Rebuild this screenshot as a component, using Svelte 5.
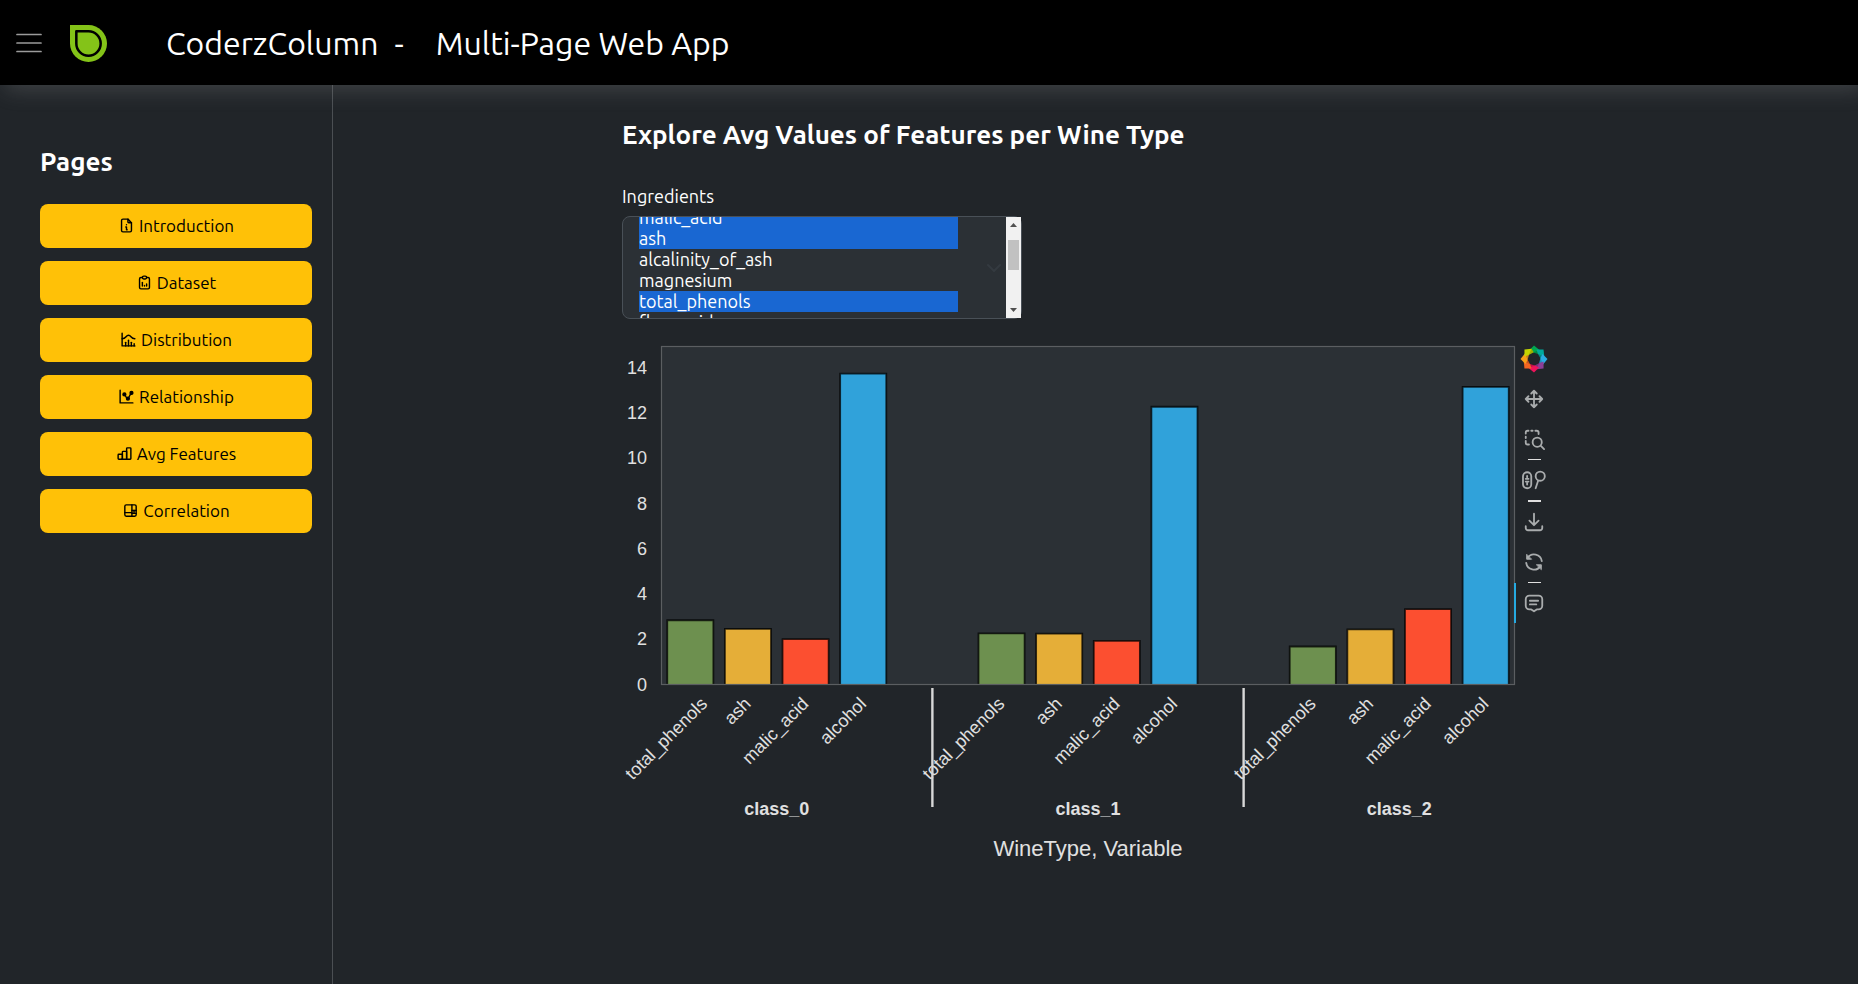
<script>
  import { onMount } from 'svelte';

  const pages = [
    { name: 'Introduction', icon: 'file' },
    { name: 'Dataset', icon: 'clipboard' },
    { name: 'Distribution', icon: 'histogram' },
    { name: 'Relationship', icon: 'dots' },
    { name: 'Avg Features', icon: 'bars' },
    { name: 'Correlation', icon: 'board' }
  ];

  const icons = {
    file: ['M14 3v4a1 1 0 0 0 1 1h4', 'M17 21H7a2 2 0 0 1-2-2V5a2 2 0 0 1 2-2h7l5 5v11a2 2 0 0 1-2 2z', 'M11 14h1v4h1', 'M12 11h.01'],
    clipboard: ['M9 5H7a2 2 0 0 0-2 2v12a2 2 0 0 0 2 2h10a2 2 0 0 0 2-2V7a2 2 0 0 0-2-2h-2', 'M9 5a2 2 0 0 1 2-2h2a2 2 0 0 1 0 4h-2a2 2 0 0 1-2-2z', 'M9 17v-5', 'M12 17v-1', 'M15 17v-3'],
    histogram: ['M3 3v18h18', 'M20 18v3', 'M16 16v5', 'M12 13v8', 'M8 16v5', 'M3 11c6 0 5-5 9-5s3 5 9 5'],
    dots: ['M3 3v18h18', 'M10.2 10.6l2.6 4.6', 'M15.1 13.4l3-5.4'],
    bars: ['M4 13h5v7H4a1 1 0 0 1-1-1v-5a1 1 0 0 1 1-1z', 'M9 20V10a1 1 0 0 1 1-1h5v11', 'M15 20V5a1 1 0 0 1 1-1h4a1 1 0 0 1 1 1v14a1 1 0 0 1-1 1H8'],
    board: ['M4 6a2 2 0 0 1 2-2h12a2 2 0 0 1 2 2v12a2 2 0 0 1-2 2H6a2 2 0 0 1-2-2z', 'M4 15h10', 'M14 4v16', 'M14 12h6', 'M17 12v4', 'M14 16h6']
  };

  const ingredients = [
    'alcohol', 'malic_acid', 'ash', 'alcalinity_of_ash', 'magnesium', 'total_phenols', 'flavanoids',
    'nonflavanoid_phenols', 'proanthocyanins', 'color_intensity', 'hue', 'od280/od315_of_diluted_wines', 'proline'
  ];
  let selected = $state(['alcohol', 'malic_acid', 'ash', 'total_phenols']);
  let list;
  let thumb = $state(8);

  // the thumb has 41px of free travel between the two arrows
  function follow() {
    const range = list.scrollHeight - list.clientHeight;
    thumb = range > 0 ? Math.round((list.scrollTop / range) * 41) : 0;
  }
  function step(rows) {
    list.scrollTop += rows * 21;
  }
  onMount(() => {
    // the list reveals its first selected option on layout, so scroll after that
    requestAnimationFrame(() => requestAnimationFrame(() => (list.scrollTop = 37)));
  });

  const columns = [
    { name: 'total_phenols', color: '#6d904f' },
    { name: 'ash', color: '#e5ae38' },
    { name: 'malic_acid', color: '#fc4f30' },
    { name: 'alcohol', color: '#30a2da' }
  ];
  const classes = [
    { name: 'class_0', values: [2.84, 2.455, 2.01, 13.745] },
    { name: 'class_1', values: [2.26, 2.245, 1.93, 12.28] },
    { name: 'class_2', values: [1.68, 2.435, 3.33, 13.155] }
  ];

  // plot frame inside the drawing; half values keep its hairlines crisp
  const left = 39.5;
  const right = 892.5;
  const top = 7.5;
  const bottom = 345.5;
  const unit = 22.62;
  // each class takes four slots, and the classes stand 1.4 slots apart
  const slot = (right - left) / 14.8;
  const centre = (c, i) => left + slot * (c * 5.4 + i + 0.5);
  const ticks = [0, 2, 4, 6, 8, 10, 12, 14];
  // the first label is pushed inward so that it stays within the drawing
  const labelX = (c, i) => (c === 0 && i === 0 ? centre(c, i) + 18 : centre(c, i) + 4);

  const petals = ['#00a650', '#00a99d', '#2aace2', '#8b3f97', '#ed145b', '#f26522', '#f7a01b', '#c4d600'];
</script>

<div class="app">
  <header>
    <button class="menu" aria-label="Toggle sidebar">
      <svg width="26" height="20" viewBox="0 0 26 20"><path d="M1 1.5h24M1 10h24M1 18.5h24" stroke="#9b9b9b" stroke-width="1.7" stroke-linecap="round" /></svg>
    </button>
    <svg class="logo" width="37" height="37" viewBox="0 0 38 38" aria-hidden="true">
      <path d="M0 0h19A19 19 0 1 1 0 19z" fill="#84c318" />
      <path d="M6.5 6.5H19A12.5 12.5 0 1 1 6.5 19z" fill="#84c318" stroke="#000" stroke-width="2.6" stroke-linejoin="round" />
    </svg>
    <div class="title">
      <a href="#home">CoderzColumn</a>
      <span class="dash">-</span>
      <a href="#app">Multi-Page Web App</a>
    </div>
  </header>

  <div class="body">
    <nav>
      <h2>Pages</h2>
      {#each pages as page}
        <button class="page">
          <svg width="17" height="17" viewBox="0 0 24 24" fill="none" stroke="currentColor" stroke-width="2" stroke-linecap="round" stroke-linejoin="round" aria-hidden="true">
            {#each icons[page.icon] as d}<path {d} />{/each}
            {#if page.icon === 'dots'}
              <g fill="currentColor"><circle cx="9" cy="9" r="2" /><circle cx="19" cy="7" r="2" /><circle cx="14" cy="15" r="2" /></g>
            {/if}
          </svg>
          {page.name}
        </button>
      {/each}
    </nav>

    <main>
      <div class="column">
        <h2>Explore Avg Values of Features per Wine Type</h2>
        <label for="ingredients">Ingredients</label>
        <div class="list">
          <select id="ingredients" multiple bind:value={selected} bind:this={list} onscroll={follow}>
            {#each ingredients as item}<option value={item}>{item}</option>{/each}
          </select>
          <div class="scrollbar">
            <button tabindex="-1" aria-label="Scroll up" onclick={() => step(-1)}>
              <svg width="15" height="15" viewBox="0 0 15 15"><path d="M4 10l3.5-4 3.5 4z" fill="#505050" /></svg>
            </button>
            <div class="track"><div class="thumb" style="margin-top: {thumb}px"></div></div>
            <button tabindex="-1" aria-label="Scroll down" onclick={() => step(1)}>
              <svg width="15" height="15" viewBox="0 0 15 15"><path d="M4 5l3.5 4 3.5-4z" fill="#505050" /></svg>
            </button>
          </div>
        </div>

        <div class="plot">
          <svg class="chart" viewBox="0 0 893 540" role="img" aria-label="Average values by wine type">
            <rect x={left} y={top} width={right - left} height={bottom - top} fill="#2b3035" />
            {#each classes as group, c}
              {#each group.values as value, i}
                <path
                  d="M{centre(c, i) - slot * 0.4} {bottom}v{-value * unit}h{slot * 0.8}v{value * unit}"
                  fill={columns[i].color}
                  stroke="#000"
                  stroke-opacity="0.75"
                  stroke-width="1.8"
                />
                <text class="tick" text-anchor="end" transform="translate({labelX(c, i)} 366) rotate(-45)">{columns[i].name}</text>
              {/each}
              <text class="group" text-anchor="middle" x={left + slot * (c * 5.4 + 2)} y="476">{group.name}</text>
            {/each}
            <rect x={left} y={top} width={right - left} height={bottom - top} fill="none" stroke="#5b5e61" stroke-width="1.2" />
            {#each [4.7, 10.1] as gap}
              <path d="M{left + slot * gap} 349V468" stroke="#d8d8d8" stroke-width="2.4" />
            {/each}
            {#each ticks as t}
              <text class="tick" text-anchor="end" x="25" y={bottom - t * unit + 6}>{t}</text>
            {/each}
            <text class="axis" text-anchor="middle" x={(left + right) / 2} y="517">WineType, Variable</text>
          </svg>

          <div class="toolbar">
            <a href="#bokeh" aria-label="Bokeh">
              <svg width="28" height="28" viewBox="-14 -14 28 28">
                {#each petals as fill, i}
                  <g transform="rotate({i * 45})">
                    <path d="M-5-8.500L0-13.500L5.500-9L4.500-5L-1-6.500Z" {fill} />
                    <path d="M-1-6.500L5.500-9L4.500-5Z" fill="#000" fill-opacity="0.18" />
                  </g>
                {/each}
              </svg>
            </a>
            <button aria-label="Pan">
              <svg viewBox="0 0 24 24"><path d="M12 3v18M3 12h18M9 6l3-3 3 3M9 18l3 3 3-3M6 9l-3 3 3 3M18 9l3 3-3 3" /></svg>
            </button>
            <button aria-label="Box zoom">
              <svg viewBox="0 0 24 24"><circle cx="15.5" cy="15.5" r="5" /><path d="M19.5 19.5L23 23M3 6V5a2 2 0 0 1 2-2h1M9 3h1.500M13.500 3H15a2 2 0 0 1 2 2v1.500M3 9.500v1.500M3 14v2a2 2 0 0 0 2 2h1.500" /></svg>
            </button>
            <hr />
            <button aria-label="Wheel zoom">
              <svg viewBox="0 0 24 24"><rect x="0" y="3.500" width="9" height="17.500" rx="4.500" /><path d="M4.500 7.500v1.500M4.500 15.500V17M3 10.700h3M3 13.700h3M16.500 12.800L13.800 21" /><circle cx="18.800" cy="7.800" r="5" /></svg>
            </button>
            <hr class="thick" />
            <button aria-label="Save">
              <svg viewBox="0 0 24 24"><path d="M3 16.500v2A2.500 2.500 0 0 0 5.500 21h13a2.500 2.500 0 0 0 2.500-2.500v-2M12 3v12M7 10.500l5 5 5-5" /></svg>
            </button>
            <button aria-label="Reset">
              <svg viewBox="0 0 24 24"><path d="M20.500 11A8.500 8.500 0 0 0 5 7.500M3.500 13A8.500 8.500 0 0 0 19 16.500" /><path d="M4 4v5h5zM20 20v-5h-5z" fill="currentColor" stroke-width="1" /></svg>
            </button>
            <hr />
            <button class="active" aria-label="Hover">
              <svg viewBox="0 0 24 24"><path d="M7 4h10a4 4 0 0 1 4 4v7a4 4 0 0 1-4 4h-2l-3 2-3-2H7a4 4 0 0 1-4-4V8a4 4 0 0 1 4-4zM7.500 9.500h9M7.500 13.500h7" /></svg>
            </button>
          </div>
        </div>
      </div>
    </main>
  </div>
</div>

<style>
  :global(body) {
    margin: 0;
    background: #212529;
  }
  .app {
    min-height: 100vh;
    display: flex;
    flex-direction: column;
    color: #fff;
    font-family: Ubuntu, 'Noto Sans', sans-serif;
    font-size: 17px;
    overflow-x: hidden;
  }
  header {
    display: flex;
    align-items: center;
    box-sizing: border-box;
    height: 85px;
    padding: 1px 16px 0;
    background: #000;
    box-shadow: 5px 5px 20px rgba(158, 158, 158, 0.24);
    position: relative;
  }
  button {
    font: inherit;
    border: 0;
    padding: 0;
    background: none;
    cursor: pointer;
  }
  .menu {
    display: flex;
  }
  .logo {
    margin-left: 28px;
  }
  .title {
    display: flex;
    align-items: center;
    margin-left: 59px;
    font-size: 32px;
    white-space: nowrap;
  }
  .title a {
    color: #fff;
    text-decoration: none;
  }
  .dash {
    margin: 0 32px 0 16px;
  }
  .body {
    flex: 1;
    display: flex;
  }
  nav {
    box-sizing: border-box;
    width: 333px;
    flex: none;
    padding: 60px 20px 24px 40px;
    border-right: 1px solid #4b4f53;
    display: flex;
    flex-direction: column;
  }
  h2 {
    margin: 0;
    font-size: 26px;
    line-height: 34px;
    font-weight: 700;
  }
  nav h2 {
    margin-bottom: 25px;
  }
  .page {
    display: flex;
    align-items: center;
    justify-content: center;
    gap: 4px;
    box-sizing: border-box;
    height: 44px;
    margin-bottom: 13px;
    padding-bottom: 2px;
    border-radius: 8px;
    background: #ffc107;
    color: #000;
  }
  main {
    flex: 1;
    min-width: 0;
    padding: 33px 0 40px;
  }
  .column {
    max-width: 947px;
    margin: 0 auto;
    display: flex;
    flex-direction: column;
    align-items: flex-start;
  }
  label {
    margin-top: 32px;
    line-height: 24px;
    font-size: 18px;
  }
  .list {
    position: relative;
    width: 400px;
    height: 103px;
    margin-top: 8px;
  }
  select {
    display: block;
    box-sizing: border-box;
    width: 100%;
    height: 100%;
    margin: 0;
    padding: 6px 63px 6px 16px;
    border: 1px solid #495057;
    border-radius: 8px;
    outline: 0;
    overflow-y: scroll;
    scrollbar-width: none;
    color: #fff;
    font-family: inherit;
    font-size: 18px;
    background: #2b3035 url("data:image/svg+xml,%3Csvg xmlns='http://www.w3.org/2000/svg' viewBox='0 0 16 16'%3E%3Cpath fill='none' stroke='%23343a40' stroke-width='2' stroke-linecap='round' stroke-linejoin='round' d='m2 5 6 6 6-6'/%3E%3C/svg%3E") no-repeat right 19px center / 16px 16px;
  }
  option {
    height: 21px;
    min-height: 21px;
    line-height: 21px;
    padding: 0;
  }
  option:checked {
    background: linear-gradient(#1967d2, #1967d2);
    color: #fff;
  }
  .scrollbar {
    position: absolute;
    top: 1px;
    right: 1px;
    bottom: 1px;
    width: 15px;
    display: flex;
    flex-direction: column;
    background: #f1f1f1;
  }
  .scrollbar button {
    display: flex;
    height: 15px;
  }
  .track {
    flex: 1;
    padding: 0 2px;
  }
  .thumb {
    height: 30px;
    background: #c1c1c1;
  }
  .track::before {
    content: '';
    display: table;
  }
  .plot {
    display: flex;
    align-items: flex-start;
    width: 100%;
    max-width: 932px;
    margin-top: 20px;
  }
  .chart {
    flex: 1;
    min-width: 0;
    overflow: visible;
    font-family: 'Liberation Sans', Arial, sans-serif;
    fill: #e0e0e0;
  }
  .tick,
  .group {
    font-size: 18px;
  }
  .group {
    font-weight: 700;
  }
  .axis {
    font-size: 22px;
  }
  /* overlaps the plot frame so that the active marker covers its edge */
  .toolbar {
    width: 40px;
    flex: none;
    margin-left: -1px;
    position: relative;
    display: flex;
    flex-direction: column;
  }
  .toolbar a,
  .toolbar button {
    display: flex;
    align-items: center;
    justify-content: center;
    height: 40px;
    color: #a9acad;
  }
  .toolbar button svg {
    width: 22px;
    height: 22px;
    overflow: visible;
    fill: none;
    stroke: currentColor;
    stroke-width: 2;
    stroke-linecap: round;
    stroke-linejoin: round;
  }
  .toolbar .active {
    box-shadow: inset 2px 0 #26aae1;
  }
  hr {
    width: 13px;
    height: 1px;
    margin: 0 auto;
    border: 0;
    background: #e0e0e0;
  }
  .thick {
    height: 2px;
  }
</style>
